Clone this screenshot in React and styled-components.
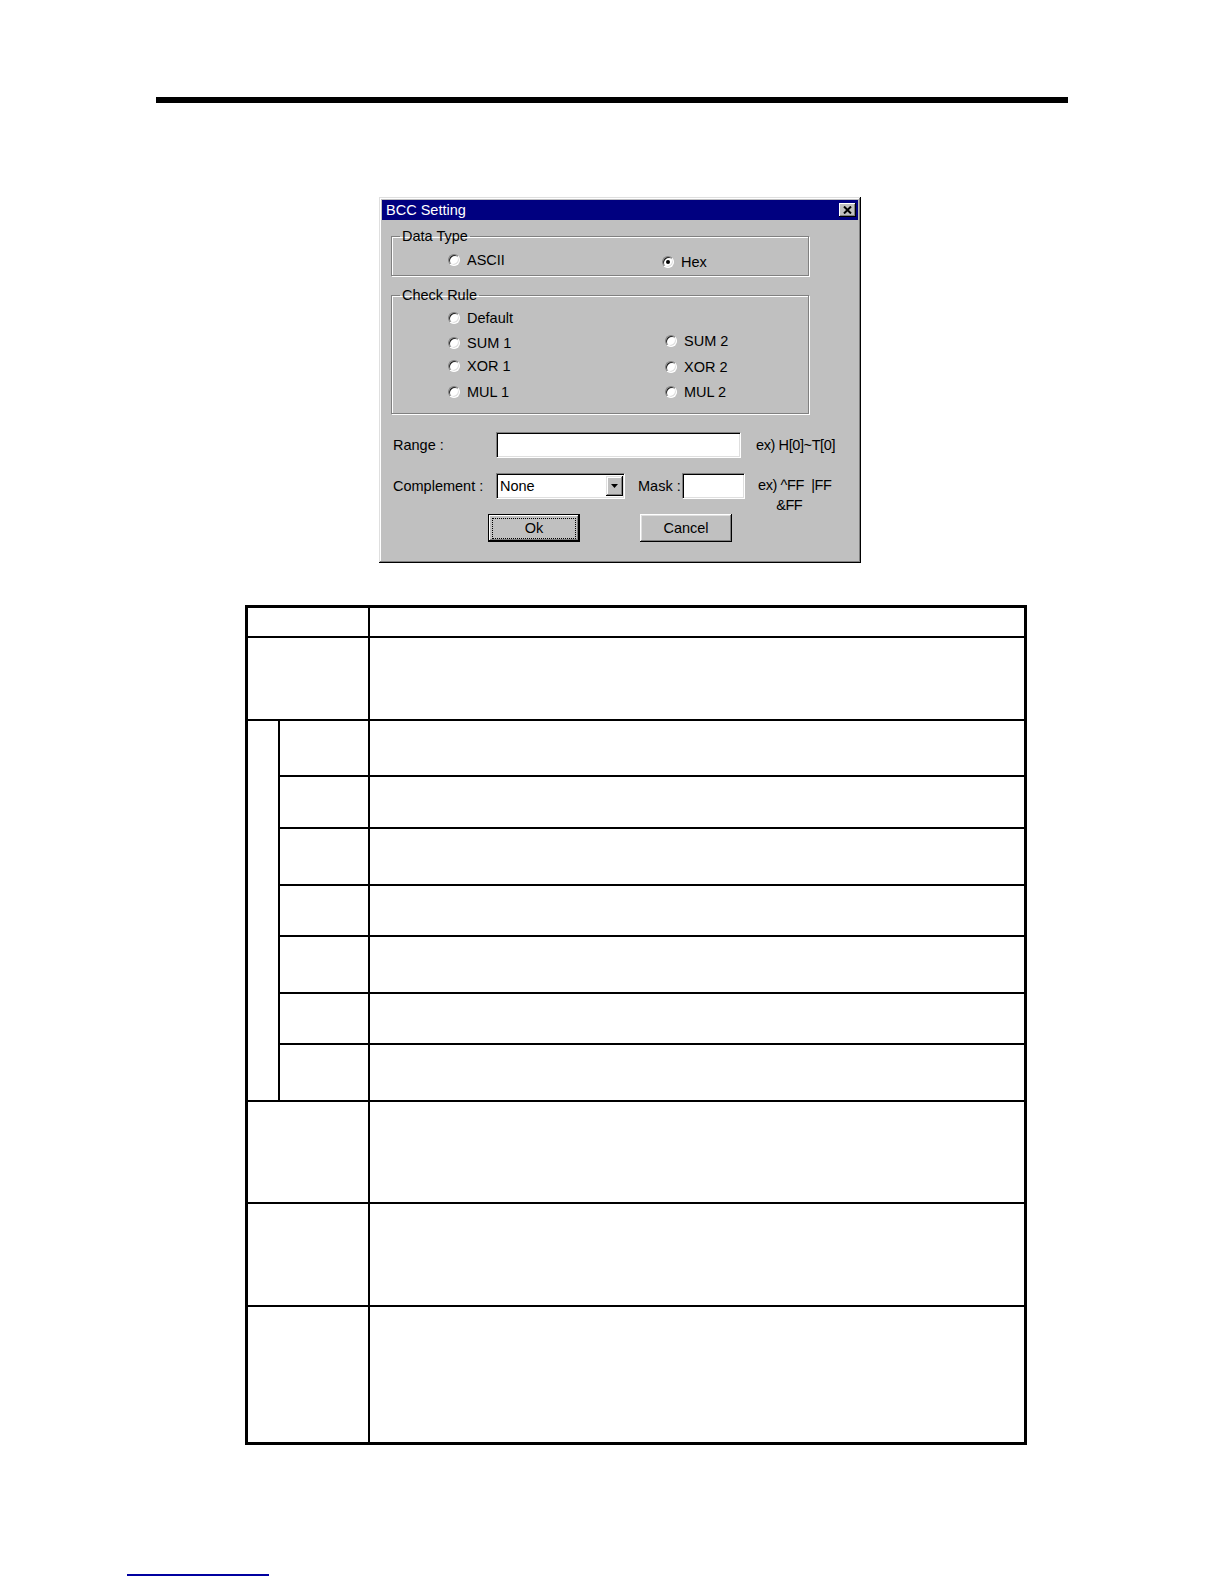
import React from "react";
import styled, { createGlobalStyle } from "styled-components";

const GlobalStyle = createGlobalStyle`
  html, body {
    margin: 0;
    padding: 0;
    background: #ffffff;
  }
  body {
    font-family: "Liberation Sans", Arial, sans-serif;
  }
`;

const Page = styled.div`
  width: 1224px;
  height: 1584px;
  overflow: hidden;
  background: #fff;
  padding-top: 1px;
  box-sizing: border-box;
`;

const TopRule = styled.div`
  margin: 96px 0 0 156px;
  width: 912px;
  height: 6px;
  background: #000;
`;

/* ---------- dialog ---------- */

const Dialog = styled.div`
  margin: 94px 0 0 379px;
  width: 482px;
  height: 366px;
  box-sizing: border-box;
  padding: 3px;
  background: #c0c0c0;
  box-shadow: inset -1px -1px 0 #000, inset 1px 1px 0 #dfdfdf,
    inset -2px -2px 0 #808080, inset 2px 2px 0 #fff;
  font-family: "Liberation Sans", Arial, sans-serif;
  font-size: 14.5px;
  color: #000;
`;

const TitleBar = styled.div`
  height: 20px;
  background: #000080;
  color: #fff;
  display: flex;
  align-items: center;
  justify-content: space-between;
  padding: 0 2px 0 4px;
  font-size: 14.5px;
`;

const CloseButton = styled.div`
  width: 17px;
  height: 14px;
  background: #c0c0c0;
  display: flex;
  align-items: center;
  justify-content: center;
  box-shadow: inset -1px -1px 0 #000, inset 1px 1px 0 #fff,
    inset -2px -2px 0 #808080;
`;

const Body = styled.div`
  padding: 8px 9px 0 9px;
`;

const Group = styled.fieldset`
  margin: ${(p) => p.$top}px 0 0 0;
  width: 418px;
  box-sizing: border-box;
  border: 1px solid #808080;
  box-shadow: 1px 1px 0 #fff, inset 1px 1px 0 #fff;
  padding: ${(p) => p.$padTop}px 0 ${(p) => p.$padBottom}px 0;
`;

const Legend = styled.legend`
  margin-left: 8px;
  padding: 0 2px;
  line-height: 16px;
`;

const RadioGrid = styled.div`
  display: grid;
  padding-left: 56px;
  grid-template-columns: ${(p) => p.$col}px 1fr;
  grid-auto-rows: ${(p) => p.$row}px;
  align-items: center;
`;

const RadioItem = styled.div`
  display: flex;
  align-items: center;
  gap: 7px;
  transform: translateY(${(p) => p.$shift || 0}px);
`;

const RadioDot = styled.span`
  width: 12px;
  height: 12px;
  border-radius: 50%;
  box-sizing: border-box;
  background: #fff;
  border: 1px solid;
  border-color: #808080 #fff #fff #808080;
  box-shadow: inset 1px 1px 0 #202020, inset -1px -1px 0 #dfdfdf;
  display: flex;
  align-items: center;
  justify-content: center;
  &::after {
    content: "";
    width: 4px;
    height: 4px;
    border-radius: 50%;
    background: ${(p) => (p.$checked ? "#000" : "transparent")};
  }
`;

const FieldRow = styled.div`
  display: flex;
  align-items: ${(p) => p.$align || "center"};
  height: 26px;
  margin-top: ${(p) => p.$top}px;
`;

const Label = styled.span`
  width: ${(p) => p.$w}px;
  padding-left: ${(p) => p.$pad || 0}px;
  line-height: 26px;
  box-sizing: border-box;
  flex: none;
  white-space: nowrap;
`;

const TextBox = styled.div`
  width: ${(p) => p.$w}px;
  height: 26px;
  box-sizing: border-box;
  background: #fff;
  border: 1px solid;
  border-color: #808080 #fff #fff #808080;
  box-shadow: inset 1px 1px 0 #000, inset -1px -1px 0 #dfdfdf;
  flex: none;
`;

const Select = styled.div`
  width: 129px;
  height: 26px;
  box-sizing: border-box;
  background: #fff;
  border: 1px solid;
  border-color: #808080 #fff #fff #808080;
  box-shadow: inset 1px 1px 0 #000, inset -1px -1px 0 #dfdfdf;
  display: flex;
  align-items: center;
  justify-content: space-between;
  padding: 2px 1px 2px 3px;
  flex: none;
`;

const SelectArrow = styled.div`
  width: 17px;
  height: 20px;
  background: #c0c0c0;
  box-shadow: inset -1px -1px 0 #000, inset 1px 1px 0 #dfdfdf,
    inset -2px -2px 0 #808080, inset 2px 2px 0 #fff;
  display: flex;
  align-items: center;
  justify-content: center;
`;

const Hint = styled.div`
  margin-left: ${(p) => p.$gap}px;
  font-size: 14.5px;
  letter-spacing: -0.4px;
  white-space: nowrap;
`;

const MaskNote = styled.div`
  margin-left: 13px;
  height: 26px;
  padding-top: 3px;
  box-sizing: border-box;
  line-height: 19.5px;
  font-size: 14.5px;
  letter-spacing: -0.4px;
  white-space: pre;
`;

const ButtonRow = styled.div`
  display: flex;
  gap: 60px;
  margin: 15px 0 0 97px;
`;

const Button = styled.div`
  width: 92px;
  height: 28px;
  box-sizing: border-box;
  background: #c0c0c0;
  display: flex;
  align-items: center;
  justify-content: center;
  box-shadow: ${(p) =>
    p.$default
      ? "inset 0 0 0 1px #000, inset -2px -2px 0 #000, inset 2px 2px 0 #fff, inset -3px -3px 0 #808080"
      : "inset -1px -1px 0 #000, inset 1px 1px 0 #fff, inset -2px -2px 0 #808080, inset 2px 2px 0 #dfdfdf"};
`;

const FocusRing = styled.span`
  display: flex;
  align-items: center;
  justify-content: center;
  width: 82px;
  height: 19px;
  border: 1px dotted #000;
`;

/* ---------- table ---------- */

const Grid = styled.div`
  margin: 42px 0 0 245px;
  width: 782px;
  box-sizing: border-box;
  border: 3px solid #000;
  display: grid;
  grid-template-columns: 32px 90px 1fr;
  grid-template-rows: 30px 83px 56px 52px 57px 51px 57px 51px 57px 102px 103px 135px;
`;

const Cell = styled.div`
  grid-column: ${(p) => p.$col};
  grid-row: ${(p) => p.$row};
  border-right: ${(p) => (p.$right ? "2px solid #000" : "none")};
  border-bottom: ${(p) => (p.$bottom ? "2px solid #000" : "none")};
  background: #fff;
`;

const FooterLink = styled.div`
  margin: 129px 0 0 127px;
  width: 142px;
  height: 2px;
  background: #0000a0;
`;

const Radio = ({ label, checked, shift }) => (
  <RadioItem $shift={shift}>
    <RadioDot $checked={checked} />
    <span>{label}</span>
  </RadioItem>
);

const ROWS = 12;

const cells = [];
for (let r = 1; r <= ROWS; r++) {
  const bottom = r < ROWS;
  if (r >= 3 && r <= 9) {
    if (r === 3) {
      cells.push({ key: "nest", col: "1", row: "3 / 10", right: true, bottom: true });
    }
    cells.push({ key: `b${r}`, col: "2", row: `${r}`, right: true, bottom });
  } else {
    cells.push({ key: `a${r}`, col: "1 / 3", row: `${r}`, right: true, bottom });
  }
  cells.push({ key: `c${r}`, col: "3", row: `${r}`, right: false, bottom });
}

export default function App() {
  return (
    <Page>
      <GlobalStyle />
      <TopRule />

      <Dialog>
        <TitleBar>
          <span>BCC Setting</span>
          <CloseButton>
            <svg width="9" height="8" viewBox="0 0 9 8">
              <path d="M1 0.5 L8 7.5 M8 0.5 L1 7.5" stroke="#000" strokeWidth="2" />
            </svg>
          </CloseButton>
        </TitleBar>

        <Body>
          <Group $top={0} $padTop={7} $padBottom={4}>
            <Legend>Data Type</Legend>
            <RadioGrid $row={20} $col={214}>
              <Radio label="ASCII" shift={-1} />
              <Radio label="Hex" checked shift={1} />
            </RadioGrid>
          </Group>

          <Group $top={11} $padTop={3} $padBottom={9}>
            <Legend>Check Rule</Legend>
            <RadioGrid $row={24.5} $col={217}>
              <Radio label="Default" />
              <span />
              <Radio label="SUM 1" />
              <Radio label="SUM 2" shift={-2} />
              <Radio label="XOR 1" shift={-1} />
              <Radio label="XOR 2" />
              <Radio label="MUL 1" />
              <Radio label="MUL 2" />
            </RadioGrid>
          </Group>

          <FieldRow $top={18}>
            <Label $w={105} $pad={2}>Range :</Label>
            <TextBox $w={245} />
            <Hint $gap={15}>ex) H[0]~T[0]</Hint>
          </FieldRow>

          <FieldRow $top={15} $align="flex-start">
            <Label $w={105} $pad={2}>Complement :</Label>
            <Select>
              <span>None</span>
              <SelectArrow>
                <svg width="7" height="4" viewBox="0 0 7 4">
                  <path d="M0 0 H7 L3.5 4 Z" fill="#000" />
                </svg>
              </SelectArrow>
            </Select>
            <Label $w={57} $pad={13}>Mask :</Label>
            <TextBox $w={63} />
            <MaskNote>{"ex) ^FF  |FF\n     &FF"}</MaskNote>
          </FieldRow>

          <ButtonRow>
            <Button $default>
              <FocusRing>Ok</FocusRing>
            </Button>
            <Button>Cancel</Button>
          </ButtonRow>
        </Body>
      </Dialog>

      <Grid>
        {cells.map((c) => (
          <Cell key={c.key} $col={c.col} $row={c.row} $right={c.right} $bottom={c.bottom} />
        ))}
      </Grid>

      <FooterLink />
    </Page>
  );
}
